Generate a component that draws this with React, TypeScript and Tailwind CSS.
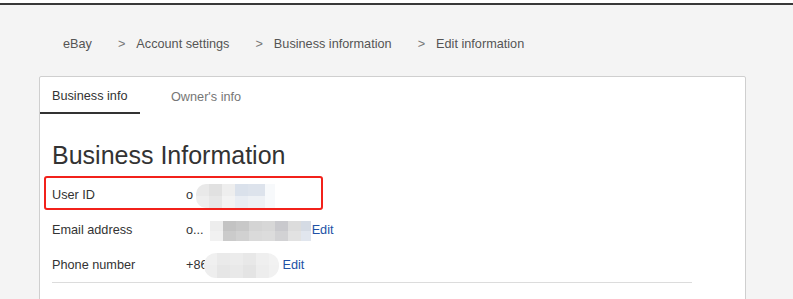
import { Fragment } from 'react';

const crumbs = ['eBay', 'Account settings', 'Business information', 'Edit information'];

export default function App() {
  return (
    <div className="w-[793px] h-[299px] overflow-hidden bg-[#f4f4f4] font-['Liberation_Sans',Arial,sans-serif] text-[12.7px] text-[#333]">
      <div className="h-[3px] bg-white" />
      <div className="h-[2px] bg-[#383838]" />

      {/* breadcrumb */}
      <nav className="flex items-center h-[30px] mt-[25px] mb-[-1px] pl-[63px] text-[#555]">
        {crumbs.map((c, i) => (
          <Fragment key={c}>
            {i > 0 && <span className="ml-[26px] mr-[11px] text-[#777]">&gt;</span>}
            <span>{c}</span>
          </Fragment>
        ))}
      </nav>

      {/* card */}
      <div className="mt-[17px] ml-[39px] w-[707px] h-[300px] bg-white border border-[#cfcfcf] rounded-t-[2px]">
        <div className="flex h-[37px]">
          <div className="flex items-center w-[100px] px-[12px] pt-[5px] border-b-2 border-[#333] text-[#333]">Business info</div>
          <div className="flex items-center ml-[19px] px-[12px] pt-[5px] text-[#767676]">Owner&apos;s info</div>
        </div>

        <div className="px-[12px]">
          <h1 className="mt-[27px] text-[25px] leading-[28px] text-[#333]">Business Information</h1>

          <div className="mt-[8px] w-[640px]">
            <div className="relative flex items-center h-[35px] pt-[2px]">
              <div className="absolute left-[-8px] top-[-1px] w-[279px] h-[34px] border-2 border-[#f2211b] rounded-[3px]" />
              <span className="w-[134px]">User ID</span>
              <span>o</span>
              <div className="ml-[3px] flex">
                <div className="grid grid-cols-[13px_13px_13px_13px_17px] grid-rows-[12px_12px] rounded-l-[10px] overflow-hidden">
                  <div className="bg-[#e9e9e9]" />
                  <div className="bg-[#e1e1e1]" />
                  <div className="bg-[#eeeeee]" />
                  <div className="bg-[#dae1eb]" />
                  <div className="bg-[#dde3ec]" />
                  <div className="bg-[#eeeeee]" />
                  <div className="bg-[#e7e7e7]" />
                  <div className="bg-[#f3f3f3]" />
                  <div className="bg-[#e9edf3]" />
                  <div className="bg-[#eef1f5]" />
                </div>
                <div className="w-[10px] h-[24px] bg-[#f7f9fb]" />
              </div>
            </div>

            <div className="flex items-center h-[35px] pt-[2px]">
              <span className="w-[134px]">Email address</span>
              <span>o...</span>
              <div className="ml-[6px] grid grid-cols-[13px_13px_13px_13px_13px_13px_13px_10px] grid-rows-[10px_10px] mt-[1px]">
                <div className="bg-[#ededed]" />
                <div className="bg-[#c3c3c3]" />
                <div className="bg-[#c8c8c8]" />
                <div className="bg-[#d4d4d4]" />
                <div className="bg-[#d7d7d7]" />
                <div className="bg-[#c9c9cd]" />
                <div className="bg-[#dcdcdc]" />
                <div className="bg-[#d5dbe4]" />
                <div className="bg-[#f1f1f1]" />
                <div className="bg-[#cbcbcb]" />
                <div className="bg-[#d1d1d1]" />
                <div className="bg-[#dadada]" />
                <div className="bg-[#dcdcdc]" />
                <div className="bg-[#d2d2d4]" />
                <div className="bg-[#e2e2e2]" />
                <div className="bg-[#e1e6ee]" />
              </div>
              <a className="ml-[1px] text-[#2251a5]">Edit</a>
            </div>

            <div className="flex items-center h-[35px] pt-[2px]">
              <span className="w-[134px]">Phone number</span>
              <span>+86</span>
              <div className="ml-[-4px] grid grid-cols-[13px_13px_13px_13px_13px_10px] grid-rows-[12px_13px] rounded-[12px] overflow-hidden">
                <div className="bg-[#f0f0f0]" />
                <div className="bg-[#eaeaea]" />
                <div className="bg-[#ececec]" />
                <div className="bg-[#e8e8e8]" />
                <div className="bg-[#efefef]" />
                <div className="bg-[#f2f2f2]" />
                <div className="bg-[#eeeeee]" />
                <div className="bg-[#e6e6e6]" />
                <div className="bg-[#e9e9e9]" />
                <div className="bg-[#e4e4e4]" />
                <div className="bg-[#ededed]" />
                <div className="bg-[#f1f1f1]" />
              </div>
              <a className="ml-[4px] text-[#2251a5]">Edit</a>
            </div>

            <div className="h-px bg-[#dcdcdc]" />
          </div>
        </div>
      </div>
    </div>
  );
}
